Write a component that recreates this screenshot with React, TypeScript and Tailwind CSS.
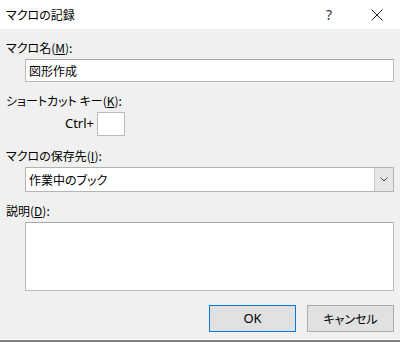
import React from "react";

const font = "font-['Noto_Sans_CJK_JP','Noto_Sans',sans-serif] [font-feature-settings:'palt']";
const latin = "font-['Noto_Sans','Noto_Sans_CJK_JP',sans-serif]";

function Label({ text, accel }: { text: string; accel: string }) {
  return (
    <div className="pl-[6px] h-4 text-[12px] leading-4 text-black">
      {text}(<span className="underline underline-offset-[1px]">{accel}</span>):
    </div>
  );
}

export default function App() {
  return (
    <div className={`w-[400px] h-[342px] flex flex-col bg-[#f0f0f0] ${font}`}>
      {/* title bar */}
      <div className="h-[29px] bg-white flex items-center pl-[6px] pr-[17px] shrink-0">
        <span className="text-[12px] text-black flex-1">マクロの記録</span>
        <span className={`text-[14px] text-[#333] mr-[39px] ${latin}`}>?</span>
        <svg width="12" height="12" viewBox="0 0 12 12" className="mt-[1px]">
          <path d="M0.5 0.5 L11.5 11.5 M11.5 0.5 L0.5 11.5" stroke="#222" strokeWidth="1" />
        </svg>
      </div>

      <div className="flex-1 flex flex-col">
        <div className="mt-[11px]">
          <Label text="マクロ名" accel="M" />
        </div>
        <div className="mt-[3px] ml-[25px] mr-[6px] h-[23px] bg-white border border-[#bababa] border-t-[#a8a8a8] flex items-center pl-[3px] text-[12px] text-black">
          図形作成
        </div>

        <div className="mt-[11px]">
          <Label text="ショートカット キー" accel="K" />
        </div>
        <div className="mt-[3px] flex items-center pl-[62px] gap-[3px]">
          <span className={`text-[13px] text-black w-[32px] text-right ${latin}`}>Ctrl+</span>
          <div className="w-[28px] h-[24px] bg-white border border-[#bababa]" />
        </div>

        <div className="mt-[12px]">
          <Label text="マクロの保存先" accel="I" />
        </div>
        <div className="mt-[3px] ml-[25px] mr-[6px] h-[25px] bg-white border border-[#b4b4b4] flex items-stretch">
          <div className="flex-1 flex items-center pl-[3px] text-[12px] text-black">作業中のブック</div>
          <div className="w-[19px] bg-[#e6e6e6] border-l border-[#c8c8c8] flex items-center justify-center">
            <svg width="8" height="5" viewBox="0 0 8 5">
              <path d="M0.5 0.5 L4 4 L7.5 0.5" fill="none" stroke="#444" strokeWidth="1" />
            </svg>
          </div>
        </div>

        <div className="mt-[11px]">
          <Label text="説明" accel="D" />
        </div>
        <div className="mt-[3px] ml-[25px] mr-[6px] h-[69px] bg-white border border-[#bababa] border-t-[#a8a8a8]" />

        <div className="mt-[14px] flex justify-end gap-[11px] mr-[6px]">
          <button className={`w-[87px] h-[27px] bg-[#e1e1e1] border-[1.5px] border-[#0078d7] text-[13px] text-black ${latin}`}>
            OK
          </button>
          <button className={`w-[87px] h-[27px] bg-[#e1e1e1] border border-[#adadad] text-[12px] text-black ${font}`}>
            キャンセル
          </button>
        </div>
      </div>

      <div className="h-[1px] bg-white shrink-0" />
      <div className="h-[2px] bg-[#808080] shrink-0" />
    </div>
  );
}
